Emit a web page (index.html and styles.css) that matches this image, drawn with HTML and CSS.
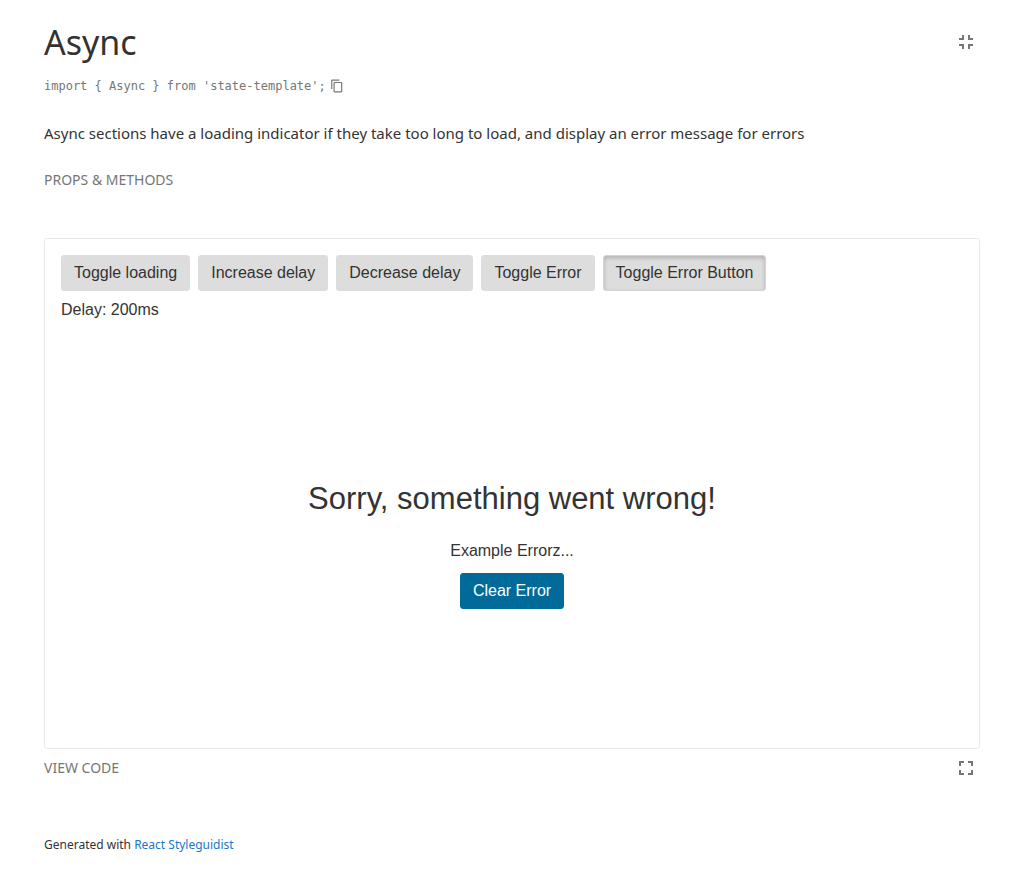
FILE: index.html
```html
<!DOCTYPE html>
<html lang="en">
<head>
<meta charset="utf-8">
<meta name="viewport" content="width=device-width, initial-scale=1">
<title>Async</title>
<link rel="stylesheet" href="styles.css">
</head>
<body>
<main class="page">
  <header class="header">
    <h1 class="title">Async</h1>
    <button class="icon-button" type="button" aria-label="Exit isolated mode">
      <svg class="icon" viewBox="0 0 24 24" aria-hidden="true"><path d="M5 16h3v3h2v-5H5v2zm3-8H5v2h5V5H8v3zm6 11h2v-3h3v-2h-5v5zm2-11V5h-2v5h5V8h-3z"/></svg>
    </button>
  </header>
  <div class="import">
    <code class="import-code">import { Async } from 'state-template';</code>
    <button class="copy-button" type="button" aria-label="Copy to clipboard">
      <svg class="copy-icon" viewBox="0 0 24 24" aria-hidden="true"><path d="M16 1H4c-1.100 0-2 .9-2 2v14h2V3h12V1zm3 4H8c-1.100 0-2 .9-2 2v14c0 1.100.9 2 2 2h11c1.100 0 2-.9 2-2V7c0-1.100-.9-2-2-2zm0 16H8V7h11v14z"/></svg>
    </button>
  </div>
  <p class="description">Async sections have a loading indicator if they take too long to load, and display an error message for errors</p>
  <button class="tab" type="button">Props &amp; methods</button>

  <section class="preview">
    <div class="toolbar">
      <button class="button" type="button">Toggle loading</button>
      <button class="button" type="button">Increase delay</button>
      <button class="button" type="button">Decrease delay</button>
      <button class="button" type="button">Toggle Error</button>
      <button class="button button-active" type="button" aria-pressed="true">Toggle Error Button</button>
    </div>
    <div class="delay">Delay: 200ms</div>
    <div class="error">
      <h2 class="error-title">Sorry, something went wrong!</h2>
      <p class="error-text">Example Errorz...</p>
      <button class="button button-primary" type="button">Clear Error</button>
    </div>
  </section>

  <div class="controls">
    <button class="tab" type="button">View code</button>
    <button class="icon-button" type="button" aria-label="Open isolated">
      <svg class="icon" viewBox="0 0 24 24" aria-hidden="true"><path d="M7 14H5v5h5v-2H7v-3zm-2-4h2V7h3V5H5v5zm12 7h-3v2h5v-5h-2v3zM14 5v2h3v3h2V5h-5z"/></svg>
    </button>
  </div>
  <footer class="footer">Generated with <a class="link" href="https://react-styleguidist.js.org">React Styleguidist</a></footer>
</main>
</body>
</html>
```
FILE: styles.css
```css
* { box-sizing: border-box; }
body {
  margin: 0;
  background: #fff;
  color: #333;
  font-family: "Segoe UI", "Noto Sans", "Open Sans", sans-serif;
}
.page { max-width: 1000px; margin: 0 auto; padding: 16px 32px; }
button { font: inherit; cursor: pointer; }

.header { display: flex; align-items: center; justify-content: space-between; height: 52px; }
.title { margin: 0; font-size: 34px; font-weight: 400; line-height: 54px; }
.icon-button { display: flex; padding: 2px; border: 0; background: none; color: #767676; }
.icon { width: 24px; height: 24px; fill: currentColor; }

.import { display: flex; align-items: center; gap: 4px; height: 36px; color: #767676; }
.import-code { font-family: Consolas, "DejaVu Sans Mono", "Liberation Mono", monospace; font-size: 12px; line-height: 16px; }
.copy-button { display: flex; padding: 0; border: 0; background: none; color: inherit; }
.copy-icon { width: 14px; height: 14px; fill: currentColor; }

.description { margin: 15px 0 0; font-size: 15px; line-height: 28px; }
.tab { padding: 0; border: 0; background: none; color: #767676; font-size: 14px; line-height: 24px; text-transform: uppercase; }
.description + .tab { display: block; margin-top: 21px; }

.preview {
  margin-top: 46px;
  padding: 16px;
  border: 1px solid #e8e8e8;
  border-radius: 3px;
  font-family: "Liberation Sans", Arial, sans-serif;
  font-size: 16px;
  line-height: 24px;
}
.toolbar { display: flex; flex-wrap: wrap; gap: 8px; }
.button {
  padding: 5px 12px;
  border: 1px solid #ddd;
  border-radius: 3px;
  background: #ddd;
  color: #333;
  line-height: 24px;
}
.button-active { border-color: #d4d4d4; box-shadow: inset 0 2px 4px rgba(0, 0, 0, .2); }
.button-primary { border-color: #006b99; background: #006b99; color: #fff; }
.delay { margin-top: 7px; }
.error {
  display: flex;
  flex-direction: column;
  align-items: center;
  justify-content: center;
  min-height: 410px;
  padding-top: 34px;
}
.error-title { margin: 0; font-size: 31px; font-weight: 400; line-height: 40px; }
.error-text { margin: 20px 0 10px; }

.controls { display: flex; align-items: center; justify-content: space-between; margin-top: 4px; height: 30px; }
.footer { margin-top: 50px; font-size: 12px; line-height: 24px; }
.link { color: #1978c8; text-decoration: none; }
```
